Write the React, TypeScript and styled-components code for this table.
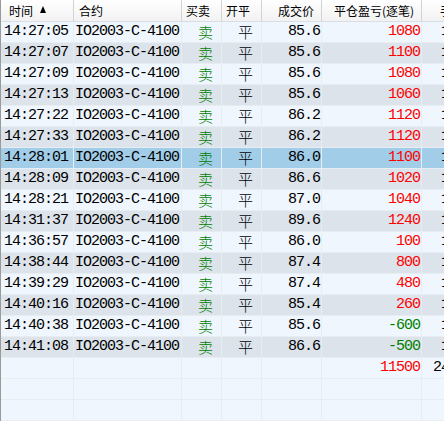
import React from "react";
import styled, { createGlobalStyle, css } from "styled-components";

const Global = createGlobalStyle`
  html, body { margin: 0; padding: 0; background: #f0f6fd; overflow: hidden; }
  #root { width: 444px; height: 421px; overflow: hidden; }
`;

const cols = "73px 108px 40px 40px 60px 100px 30px";

const Table = styled.div`
  width: 452px;
  height: 421px;
  border-left: 1px solid #9a9a9a;
  background: #f0f6fd;
  display: flex;
  flex-direction: column;
`;

const HeaderRow = styled.div`
  display: grid;
  grid-template-columns: ${cols};
  height: 22px;
  box-sizing: border-box;
  border-bottom: 1px solid #d9dee4;
  background: linear-gradient(#ffffff, #f2f2f2);
  font-family: "Noto Sans CJK SC", sans-serif;
  font-size: 12px;
  color: #000;
`;

type Align = "left" | "center" | "right";

const HeadCell = styled.div<{ $align: Align; $pl?: number; $pr?: number }>`
  box-sizing: border-box;
  display: flex;
  align-items: center;
  justify-content: ${(p) => (p.$align === "left" ? "flex-start" : p.$align === "right" ? "flex-end" : "center")};
  padding-left: ${(p) => p.$pl ?? 0}px;
  padding-right: ${(p) => p.$pr ?? 0}px;
  border-right: 1px solid #d3d3d3;
  white-space: nowrap;
  overflow: hidden;
  line-height: 21px;
  padding-bottom: 1px;
`;

const SortArrow = styled.span`
  display: inline-block;
  width: 0;
  height: 0;
  margin-left: 7px;
  border-left: 3.5px solid transparent;
  border-right: 3.5px solid transparent;
  border-bottom: 7px solid #000;
  margin-top: -2px;
`;

const Row = styled.div<{ $tone: "light" | "dark" | "sel" }>`
  display: grid;
  grid-template-columns: ${cols};
  height: 21px;
  box-sizing: border-box;
  border-bottom: 1px solid #e8edf2;
  background: ${(p) => (p.$tone === "sel" ? "#a2cde9" : p.$tone === "dark" ? "#dde3eb" : "#f0f6fd")};
  ${(p) =>
    p.$tone === "sel" &&
    css`
      border-bottom-color: #e6eef5;
    `}
`;

const Cell = styled.div<{ $align: Align; $pl?: number; $pr?: number; $color?: string; $cjk?: boolean }>`
  box-sizing: border-box;
  border-right: 1px solid #e8edf2;
  display: flex;
  align-items: center;
  justify-content: ${(p) => (p.$align === "left" ? "flex-start" : p.$align === "right" ? "flex-end" : "center")};
  padding-left: ${(p) => p.$pl ?? 0}px;
  padding-right: ${(p) => p.$pr ?? 0}px;
  padding-bottom: 2px;
  color: ${(p) => p.$color ?? "#000"};
  white-space: nowrap;
  overflow: hidden;
  font-family: ${(p) => (p.$cjk ? `"Noto Sans CJK SC", sans-serif` : `"Liberation Mono", monospace`)};
  font-weight: ${(p) => (p.$cjk ? 300 : 400)};
  font-size: 15px;
  letter-spacing: ${(p) => (p.$cjk ? "0" : "-1px")};
  line-height: 19px;
`;

const RED = "#ff0000";
const GREEN = "#008000";

const data: [string, string, number][] = [
  ["14:27:05", "85.6", 1080],
  ["14:27:07", "85.6", 1100],
  ["14:27:09", "85.6", 1080],
  ["14:27:13", "85.6", 1060],
  ["14:27:22", "86.2", 1120],
  ["14:27:33", "86.2", 1120],
  ["14:28:01", "86.0", 1100],
  ["14:28:09", "86.6", 1020],
  ["14:28:21", "87.0", 1040],
  ["14:31:37", "89.6", 1240],
  ["14:36:57", "86.0", 100],
  ["14:38:44", "87.4", 800],
  ["14:39:29", "87.4", 480],
  ["14:40:16", "85.4", 260],
  ["14:40:38", "85.6", -600],
  ["14:41:08", "86.6", -500],
];

const SELECTED = 6;

const tone = (i: number): "light" | "dark" | "sel" =>
  i === SELECTED ? "sel" : i % 2 === 1 ? "dark" : "light";

export default function App() {
  return (
    <>
      <Global />
      <Table>
        <HeaderRow>
          <HeadCell $align="left" $pl={8}>
            时间<SortArrow />
          </HeadCell>
          <HeadCell $align="left" $pl={5}>合约</HeadCell>
          <HeadCell $align="center" $pr={7}>买卖</HeadCell>
          <HeadCell $align="center" $pr={7}>开平</HeadCell>
          <HeadCell $align="right" $pr={7}>成交价</HeadCell>
          <HeadCell $align="right" $pr={7}>平仓盈亏(逐笔)</HeadCell>
          <HeadCell $align="left" $pl={18}>手数</HeadCell>
        </HeaderRow>
        {data.map(([t, price, pnl], i) => (
          <Row key={t} $tone={tone(i)}>
            <Cell $align="left" $pl={3}>{t}</Cell>
            <Cell $align="left" $pl={1}>IO2003-C-4100</Cell>
            <Cell $align="center" $pl={8} $cjk $color={GREEN}>卖</Cell>
            <Cell $align="center" $pl={8} $cjk>平</Cell>
            <Cell $align="right" $pr={1}>{price}</Cell>
            <Cell $align="right" $pr={1} $color={pnl < 0 ? GREEN : RED}>{pnl}</Cell>
            <Cell $align="right" $pr={2}>1</Cell>
          </Row>
        ))}
        <Row $tone="light">
          <Cell $align="left" />
          <Cell $align="left" />
          <Cell $align="center" />
          <Cell $align="center" />
          <Cell $align="right" />
          <Cell $align="right" $pr={1} $color={RED}>11500</Cell>
          <Cell $align="right" $pr={2}>24</Cell>
        </Row>
        {[0, 1].map((k) => (
          <Row key={k} $tone="light">
            <Cell $align="left" />
            <Cell $align="left" />
            <Cell $align="center" />
            <Cell $align="center" />
            <Cell $align="right" />
            <Cell $align="right" />
            <Cell $align="right" />
          </Row>
        ))}
      </Table>
    </>
  );
}
